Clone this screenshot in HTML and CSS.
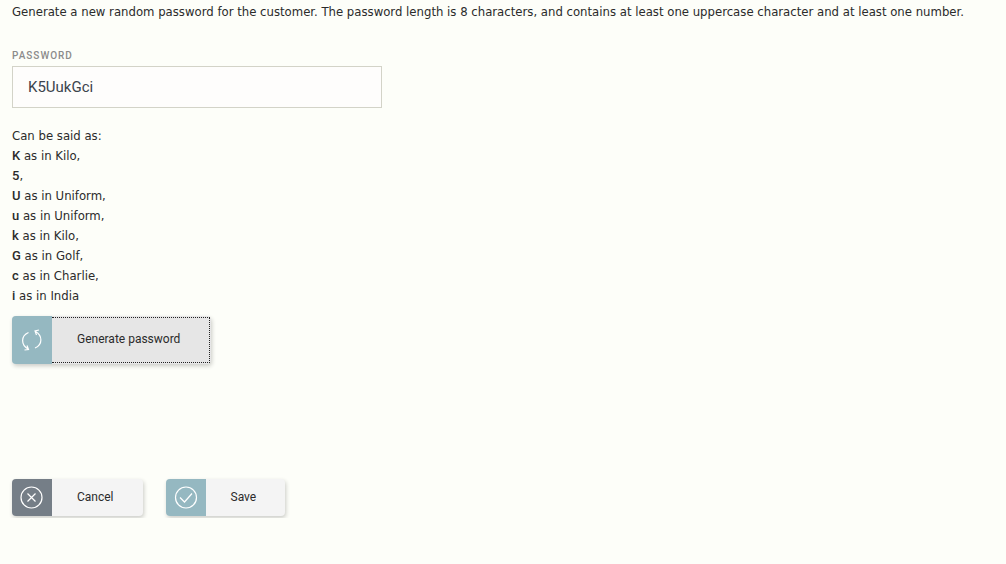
FILE: index.html
```html
<!DOCTYPE html>
<html lang="en">
  <head>
    <meta charset="UTF-8" />
    <meta name="viewport" content="width=device-width, initial-scale=1.0" />
    <title>Generate password</title>
    <link rel="stylesheet" href="styles.css">
  </head>
  <body>
    <form class="password-form">
      <p class="intro">Generate a new random password for the customer. The password length is 8 characters, and contains at least one uppercase character and at least one number.</p>

      <label class="field-label" for="password">Password</label>
      <input class="field-input" type="text" id="password" value="K5UukGci" />

      <div class="spelling">
        Can be said as:<br />
        <b>K</b> as in Kilo,<br />
        <b>5</b>,<br />
        <b>U</b> as in Uniform,<br />
        <b>u</b> as in Uniform,<br />
        <b>k</b> as in Kilo,<br />
        <b>G</b> as in Golf,<br />
        <b>c</b> as in Charlie,<br />
        <b>i</b> as in India
      </div>

      <button type="button" class="btn btn-generate">
        <span class="btn-icon">
          <svg width="24" height="24" viewBox="0 0 24 24">
            <path d="M8.5 4.5 C0.5 8 1 17 8 21 M4.5 22 L8.5 21.5 L7 17.5 M15 20 C23 16.5 22.5 7.5 15.5 3.5 M19 2 L15 3 L16.5 7" />
          </svg>
        </span>
        <span class="btn-text">Generate password</span>
      </button>

      <div class="actions">
        <button type="button" class="btn btn-cancel">
          <span class="btn-icon">
            <svg width="24" height="24" viewBox="0 0 24 24">
              <circle cx="11.5" cy="11.5" r="10.5" />
              <path d="M7.5 7.5 L15.5 15.5 M15.5 7.5 L7.5 15.5" />
            </svg>
          </span>
          <span class="btn-text">Cancel</span>
        </button>
        <button type="submit" class="btn">
          <span class="btn-icon">
            <svg width="24" height="24" viewBox="0 0 24 24">
              <circle cx="12" cy="11.5" r="10.5" />
              <path d="M6 11.5 L10.5 16 L18 7.5" />
            </svg>
          </span>
          <span class="btn-text">Save</span>
        </button>
      </div>
    </form>
  </body>
</html>
```
FILE: styles.css
```css
body {
  margin: 0;
  background: #fdfef9;
  color: #2b2b2b;
  font-family: "DejaVu Sans Condensed", Roboto, sans-serif;
  font-size: 13px;
  line-height: 20px;
}

.password-form {
  padding: 2px 12px;
}

.intro {
  margin: 0 0 24px;
}

/* Password field */
.field-label {
  display: block;
  color: #8b8b8b;
  font-family: Roboto, sans-serif;
  font-size: 10px;
  font-weight: 500;
  letter-spacing: 1px;
  text-transform: uppercase;
}

.field-input {
  display: block;
  box-sizing: border-box;
  width: 100%;
  max-width: 370px;
  height: 42px;
  padding: 0 15px;
  border: 1px solid #d3d3c8;
  background: #fefdfc;
  color: #3c444c;
  font-family: Roboto, sans-serif;
  font-size: 15px;
}

.field-input:focus {
  border-color: #95b8c1;
  outline: none;
}

/* Spelled out password */
.spelling {
  margin: 18px 0 10px;
}

.spelling b {
  font-family: Roboto, sans-serif;
  font-weight: 500;
}

/* Buttons */
.btn {
  display: flex;
  min-height: 37px;
  padding: 0;
  border: none;
  border-radius: 4px;
  background: #f4f4f4;
  box-shadow: 1px 2px 4px rgba(0, 0, 0, 0.2);
  color: #2b2b2b;
  font-family: Roboto, sans-serif;
  font-size: 12px;
  line-height: 20px;
  cursor: pointer;
}

.btn-icon {
  display: flex;
  flex: none;
  align-items: center;
  align-self: stretch;
  justify-content: center;
  width: 40px;
  border-radius: 4px 0 0 4px;
  background: #95b8c1;
}

.btn-icon svg {
  fill: none;
  stroke: #fff;
  stroke-width: 1.2;
}

.btn-text {
  padding: 8px 29px 9px 25px;
}

.btn-generate {
  min-height: 48px;
  background: #e6e6e6;
}

.btn-generate .btn-text {
  margin: 1px 1px 1px 0;
  padding: 11px 29px 13px 25px;
  border: 1px dotted #222;
  border-left: none;
}

.btn-cancel .btn-icon {
  background: #757e87;
}

.actions {
  display: flex;
  gap: 23px;
  margin-top: 115px;
}
```
